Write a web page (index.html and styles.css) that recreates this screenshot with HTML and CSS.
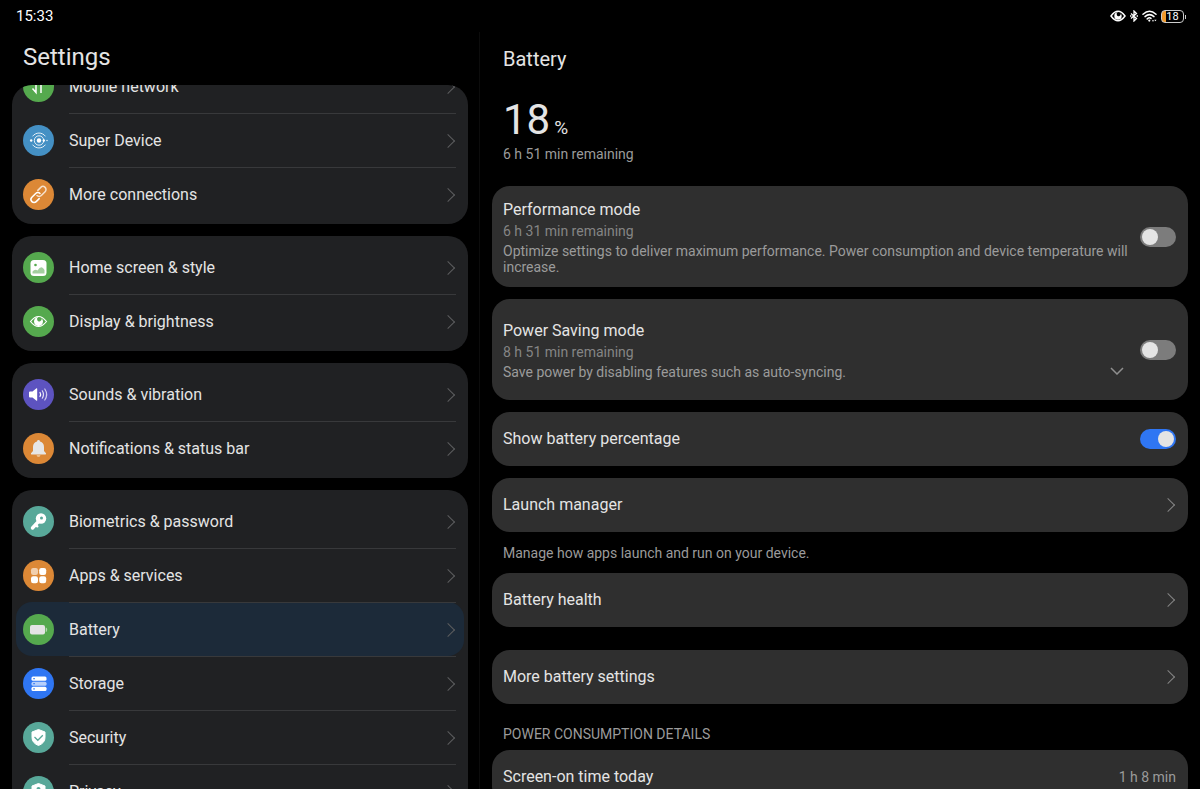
FILE: index.html
```html
<!DOCTYPE html>
<html lang="en">
<head>
    <meta charset="UTF-8">
    <meta name="viewport" content="width=device-width, initial-scale=1.0">
    <title>Settings</title>
    <link rel="stylesheet" href="styles.css">
</head>
<body>

<header class="status-bar">
    <span class="clock">15:33</span>
    <div class="status-icons">
        <svg width="16" height="12" viewBox="0 0 16 12"><path d="M1 6Q8-3.500 15 6Q8 15.500 1 6Z" fill="none" stroke="#fff" stroke-width="1.500"/><path d="M8 2.300A3.700 3.700 0 1 0 11.700 6A3.700 3.700 0 0 0 10.400 3.200A2 2 0 1 1 8 2.300Z" fill="#fff"/></svg>
        <svg width="8" height="12" viewBox="0 0 8 12"><path d="M1 3.500L6.500 8.500L4 11V1L6.500 3.500L1 8.500" fill="none" stroke="#fff" stroke-width="1.300"/><path d="M0 6h1.400M6.600 6H8" stroke="#fff" stroke-width="1.300"/></svg>
        <svg width="15" height="12" viewBox="0 0 15 12"><g fill="none" stroke="#fff" stroke-width="1.500" stroke-linecap="round"><path d="M1 4.200Q7.500-1.600 14 4.200"/><path d="M3 6.600Q7.500 2.700 12 6.600"/><path d="M5.200 8.900Q7.500 7 9 8.400"/></g><circle cx="7.300" cy="10.600" r="1.100" fill="#fff"/><path d="M9.800 11.300l1.200-1.600 1.200 1.600zM12.200 9.700l1.200 1.600 1.200-1.600z" fill="#fff"/></svg>
        <span class="battery-pill">18</span>
    </div>
</header>

<main class="columns">
    <nav class="sidebar">
        <h1>Settings</h1>
        <div class="menu">
            <div class="group">
                <a href="#" class="item">
                    <svg class="icon green" viewBox="0 0 31 31"><path d="M13 8v13.500l-3.500-4M18 22V9l3.500 4" fill="none" stroke="#fff" stroke-width="1.500"/></svg>
                    <span class="label">Mobile network</span>
                </a>
                <a href="#" class="item">
                    <svg class="icon sky" viewBox="0 0 31 31"><circle cx="16" cy="15.500" r="2.200" fill="#fff"/><circle cx="16" cy="15.500" r="4.700" fill="none" stroke="#fff" opacity=".85"/><path d="M9.800 11A7.700 7.700 0 0 1 22.200 11M9.800 20A7.700 7.700 0 0 0 22.200 20" fill="none" stroke="#fff" stroke-linecap="round" opacity=".85"/><circle cx="8.200" cy="15.500" r="1.200" fill="#fff"/><circle cx="20.800" cy="15.500" r="1.200" fill="#fff"/><circle cx="24" cy="15.500" r=".7" fill="#fff"/></svg>
                    <span class="label">Super Device</span>
                </a>
                <a href="#" class="item">
                    <svg class="icon orange" viewBox="0 0 31 31"><g fill="none" stroke="#fff" stroke-width="1.500" stroke-linecap="round"><path d="M14 16.500a3 3 0 0 0 4.300 0l3.800-3.800a3 3 0 0 0-4.300-4.300l-3 3" opacity=".75"/><path d="M17 14.500a3 3 0 0 0-4.300 0l-3.800 3.800a3 3 0 0 0 4.300 4.300l3-3"/></g></svg>
                    <span class="label">More connections</span>
                </a>
            </div>
            <div class="group">
                <a href="#" class="item">
                    <svg class="icon green" viewBox="0 0 31 31"><rect x="7.500" y="8" width="16" height="16" rx="3.500" fill="#fff"/><circle cx="12.500" cy="13" r="1.300" fill="#55a94e"/><path d="M9.500 21.500V19.500Q12 16.500 14.500 18.500Q18.500 12.500 21.500 18V21.500Z" fill="#a3cf9f"/></svg>
                    <span class="label">Home screen &amp; style</span>
                </a>
                <a href="#" class="item">
                    <svg class="icon green" viewBox="0 0 31 31"><path d="M7.500 15.500Q15.500 5.500 23.500 15.500Q15.500 25.500 7.500 15.500Z" fill="none" stroke="#fff" stroke-width="1.200"/><path d="M15.500 11A4.500 4.500 0 1 0 20 15.500A4.500 4.500 0 0 0 18.500 12.300A2.300 2.300 0 1 1 15.500 11Z" fill="#fff"/></svg>
                    <span class="label">Display &amp; brightness</span>
                </a>
            </div>
            <div class="group">
                <a href="#" class="item">
                    <svg class="icon purple" viewBox="0 0 31 31"><path d="M7 12.500h2.500l4-3.200q.7-.3.700.5v11.400q0 .8-.7.500l-4-3.200H7q-1 0-1-1v-4q0-1 1-1z" fill="#fff"/><g fill="none" stroke="#fff" stroke-width="1.200" stroke-linecap="round"><path d="M17 13.500q1.200 2 0 4"/><path d="M19.300 11.800q2.300 3.700 0 7.400" opacity=".8"/><path d="M21.800 10q3.700 5.500 0 11" opacity=".7"/></g></svg>
                    <span class="label">Sounds &amp; vibration</span>
                </a>
                <a href="#" class="item">
                    <svg class="icon orange" viewBox="0 0 31 31"><path d="M15.500 7q1.300 0 1.500 1.400q4 1.200 4 5.600v4l2 2.300q.4 1.200-.8 1.200H8.800q-1.200 0-.8-1.200L10 18v-4q0-4.400 4-5.600q.2-1.400 1.500-1.400z" fill="#e6e6e6"/><path d="M13.500 22.300h4q-.5 1.500-2 1.500t-2-1.500z" fill="#f1d0a8"/></svg>
                    <span class="label">Notifications &amp; status bar</span>
                </a>
            </div>
            <div class="group">
                <a href="#" class="item">
                    <svg class="icon teal" viewBox="0 0 31 31"><path d="M15.500 15.500L9.500 22" stroke="#fff" stroke-width="3.400" stroke-linecap="round"/><path d="M12.500 18.500l1.800 1.800" stroke="#fff" stroke-width="2.400" stroke-linecap="round"/><circle cx="18" cy="12.500" r="5.200" fill="#fff"/><circle cx="18.500" cy="12" r="1.500" fill="#58a899"/></svg>
                    <span class="label">Biometrics &amp; password</span>
                </a>
                <a href="#" class="item">
                    <svg class="icon orange" viewBox="0 0 31 31"><g fill="#fff"><rect x="8" y="8" width="7" height="7" rx="2.200" opacity=".6"/><rect x="16.200" y="8" width="7" height="7" rx="2.200"/><rect x="8" y="16.200" width="7" height="7" rx="2.200"/><rect x="16.200" y="16.200" width="7" height="7" rx="2.200"/></g></svg>
                    <span class="label">Apps &amp; services</span>
                </a>
                <a href="#" class="item active">
                    <svg class="icon green" viewBox="0 0 31 31"><rect x="7" y="11" width="15" height="9.500" rx="2" fill="#e4e4e4"/><path d="M22.700 13.500q1.500 0 1.500 2.200t-1.500 2.200z" fill="#b4d6b0"/></svg>
                    <span class="label">Battery</span>
                </a>
                <a href="#" class="item">
                    <svg class="icon blue" viewBox="0 0 31 31"><g fill="#fff"><rect x="8.500" y="8.500" width="15" height="4.200" rx="1.500"/><rect x="8.500" y="13.700" width="15" height="4" rx="1.500" opacity=".65"/><rect x="8.500" y="18.800" width="15" height="4.200" rx="1.500"/></g><path d="M10.300 10.600h1.500M10.300 15.700h1.500M10.300 20.900h1.500" stroke="#2f76f3" stroke-width="1.200"/></svg>
                    <span class="label">Storage</span>
                </a>
                <a href="#" class="item">
                    <svg class="icon teal" viewBox="0 0 31 31"><path d="M15.500 7.500L22 10V15.500Q22 21 15.500 23.500Q9 21 9 15.500V10Z" fill="#fff" stroke="#fff" stroke-linejoin="round"/><path d="M11.500 15l3.300 3.300 5-5" fill="none" stroke="#58a899" stroke-width="1.300"/></svg>
                    <span class="label">Security</span>
                </a>
                <a href="#" class="item">
                    <svg class="icon teal" viewBox="0 0 31 31"><path d="M15.500 7.500L22 10V15.500Q22 21 15.500 23.500Q9 21 9 15.500V10Z" fill="#fff" stroke="#fff" stroke-linejoin="round"/><circle cx="15.500" cy="13" r="2" fill="#58a899"/><path d="M11.800 19q0-3.500 3.700-3.500t3.700 3.500z" fill="#58a899"/></svg>
                    <span class="label">Privacy</span>
                </a>
            </div>
        </div>
    </nav>

    <section class="detail">
        <h2>Battery</h2>
        <div class="summary">
            <p class="level">18<small>%</small></p>
            <p class="sub">6 h 51 min remaining</p>
        </div>

        <div class="card mode">
            <div class="text">
                <label for="performance">Performance mode</label>
                <p class="sub dim">6 h 31 min remaining</p>
                <p class="sub desc">Optimize settings to deliver maximum performance. Power consumption and device temperature will increase.</p>
            </div>
            <input type="checkbox" class="switch" id="performance">
        </div>

        <div class="card mode">
            <div class="text">
                <label for="saving">Power Saving mode</label>
                <p class="sub dim">8 h 51 min remaining</p>
                <div class="desc-row">
                    <p class="sub desc">Save power by disabling features such as auto-syncing.</p>
                    <button class="expand" aria-label="Show details"><svg width="14" height="8" viewBox="0 0 14 8"><path d="M1 1l6 6 6-6" fill="none" stroke="#8f8f8f" stroke-width="1.500"/></svg></button>
                </div>
            </div>
            <input type="checkbox" class="switch" id="saving">
        </div>

        <div class="card row">
            <label for="percentage">Show battery percentage</label>
            <input type="checkbox" class="switch" id="percentage" checked>
        </div>

        <div class="stack">
            <a href="#" class="card row link">Launch manager</a>
            <p class="sub note">Manage how apps launch and run on your device.</p>
            <a href="#" class="card row link">Battery health</a>
        </div>

        <a href="#" class="card row link more">More battery settings</a>

        <div class="stack usage">
            <h3>POWER CONSUMPTION DETAILS</h3>
            <div class="card row">
                <span>Screen-on time today</span>
                <span class="sub">1 h 8 min</span>
            </div>
        </div>
    </section>
</main>

</body>
</html>
```

FILE: styles.css
```css
* {
    box-sizing: border-box;
}
body {
    font-family: Roboto, "Noto Sans", sans-serif;
    font-size: 16px;
    line-height: 20px;
    margin: 0;
    height: 100vh;
    display: flex;
    flex-direction: column;
    overflow: hidden;
    background-color: #000;
    color: #e4e4e4;
}
h1, h2, h3, p {
    margin: 0;
    font-weight: normal;
}
a {
    color: inherit;
    text-decoration: none;
}

/* Status bar */
.status-bar {
    display: flex;
    justify-content: space-between;
    align-items: center;
    height: 32px;
    padding: 0 14px 0 16px;
    flex-shrink: 0;
    color: #fff;
    font-size: 15px;
}
.status-icons {
    display: flex;
    align-items: center;
    gap: 4px;
}
.battery-pill {
    position: relative;
    width: 23px;
    height: 13px;
    margin-right: 2px;
    border: 1px solid #ccc;
    border-radius: 4px;
    background: linear-gradient(90deg, #f09a2c 4px, transparent 4px);
    font-size: 11px;
    line-height: 11px;
    text-align: center;
}
.battery-pill::after {
    content: "";
    position: absolute;
    right: -3px;
    top: 4px;
    width: 1px;
    height: 4px;
    background-color: #ccc;
}

.columns {
    display: flex;
    flex: 1;
    min-height: 0;
}

/* Left menu */
.sidebar {
    width: 40%;
    padding: 0 11px 0 12px;
    display: flex;
    flex-direction: column;
    border-right: 1px solid #0c0c0c;
}
.sidebar h1 {
    padding: 10px 11px 13px;
    font-size: 24px;
    line-height: 30px;
}
.menu {
    flex: 1;
    min-height: 0;
    overflow: hidden;
    border-radius: 20px 20px 0 0;
}
.group {
    margin-bottom: 12px;
    padding: 4px 4px 3px;
    border-radius: 20px;
    background-color: #202123;
}
/* list is scrolled past the first rows */
.group:first-child {
    margin-top: -30px;
}
.item {
    display: flex;
    align-items: center;
    gap: 15px;
    height: 54px;
    padding: 0 8px 0 7px;
    border-radius: 16px;
}
.item.active {
    background-color: #1c2a39;
}
.icon {
    width: 31px;
    height: 31px;
    border-radius: 50%;
    flex-shrink: 0;
}
.green { background-color: #55a94e; }
.sky { background-color: #4490c4; }
.orange { background-color: #dc8836; }
.purple { background-color: #5d53c0; }
.teal { background-color: #58a899; }
.blue { background-color: #2f76f3; }
.label {
    display: flex;
    align-items: center;
    justify-content: space-between;
    flex: 1;
    height: 54px;
    border-top: 1px solid #38393b;
}
.item:first-child .label {
    border-top-color: transparent;
}
.label::after, .link::after {
    content: "";
    width: 9px;
    height: 9px;
    margin-right: 3px;
    border: solid #5c5d5f;
    border-width: 1px 1px 0 0;
    transform: rotate(45deg);
}

/* Right panel */
.detail {
    flex: 1;
    padding: 12px;
}
.detail h2 {
    padding: 0 11px;
    font-size: 20px;
    line-height: 30px;
}
.summary {
    padding: 22px 11px;
}
.level {
    font-size: 42px;
    line-height: 48px;
    height: 48px;
}
.level small {
    margin-left: 4px;
    font-size: 19px;
    line-height: 20px;
}
.sub {
    font-size: 14px;
    line-height: 20px;
    color: #9b9b9b;
}
.card {
    margin-bottom: 12px;
    padding: 0 12px 0 11px;
    border-radius: 18px;
    background-color: #2f2f2f;
}
.mode {
    display: flex;
    align-items: center;
    gap: 8px;
    height: 101px;
}
.mode .text {
    flex: 1;
}
.mode label {
    display: block;
    line-height: 23px;
}
.mode .dim {
    color: #858585;
}
.mode .desc {
    line-height: 16px;
    padding: 2px 0 1px;
}
.desc-row {
    display: flex;
    justify-content: space-between;
    align-items: center;
}
.expand {
    display: flex;
    padding: 0 8px;
    border: none;
    background: none;
    cursor: pointer;
}
.row {
    display: flex;
    justify-content: space-between;
    align-items: center;
    height: 54px;
}
.link::after {
    border-color: #858585;
}
.stack .card {
    margin: 0;
}
.note {
    padding: 11px 11px 10px;
}
.more {
    margin: 23px 0 20px;
}
.usage h3 {
    padding: 0 11px 6px;
    font-size: 14px;
    color: #9b9b9b;
}
.switch {
    appearance: none;
    width: 36px;
    height: 20px;
    margin: 0;
    padding: 2px;
    border-radius: 10px;
    background-color: #7c7c7c;
    display: flex;
    flex-shrink: 0;
    cursor: pointer;
}
.switch::before {
    content: "";
    width: 16px;
    height: 16px;
    border-radius: 50%;
    background-color: #e4e4e4;
}
.switch:checked {
    justify-content: flex-end;
    background-color: #2f76f3;
}
```
